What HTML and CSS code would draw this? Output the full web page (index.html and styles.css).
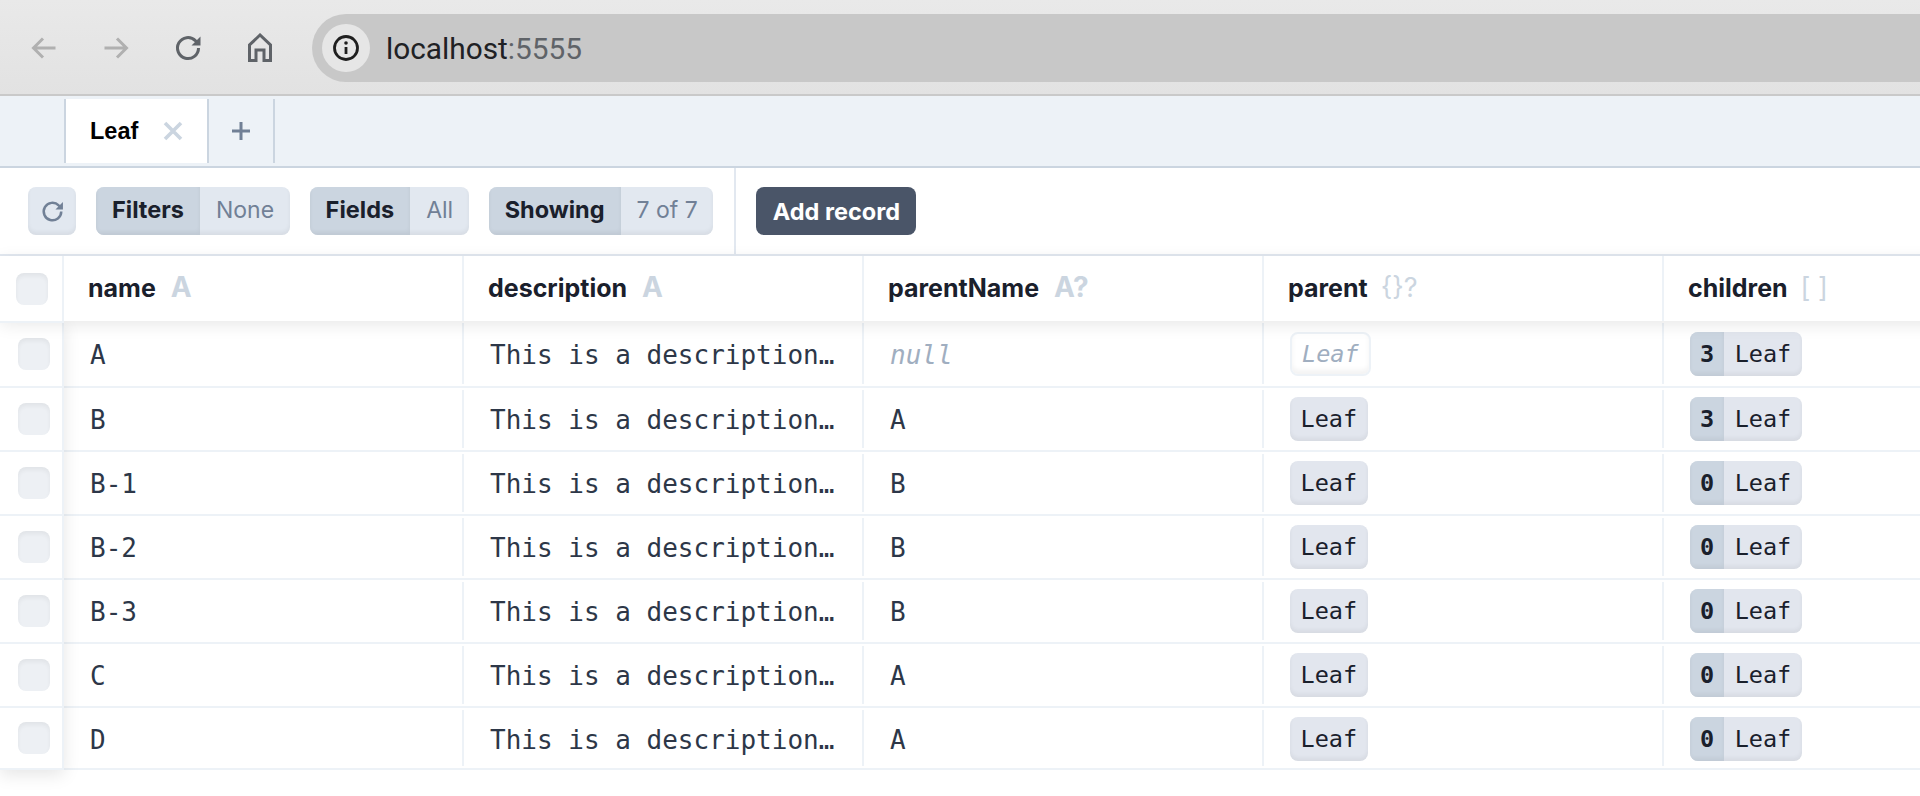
FILE: index.html
```html
<!DOCTYPE html>
<html lang="en">
<head>
  <meta charset="UTF-8">
  <title>Leaf</title>
  <link rel="stylesheet" href="styles.css">
</head>
<body>

  <div class="browser-bar">
    <svg class="nav-icon faded" viewBox="0 0 30 30"><path d="M26.500 15H5M14 5.500 4.500 15l9.500 9.500"/></svg>
    <svg class="nav-icon faded" viewBox="0 0 30 30"><path d="M3.500 15H25M16 5.500l9.500 9.500-9.500 9.500"/></svg>
    <svg class="nav-icon" viewBox="0 0 30 30"><path d="M25.500 15A10.500 10.500 0 1 1 22.400 7.600L25 10"/><path class="solid" d="M27.500 3.500v9h-9z"/></svg>
    <svg class="nav-icon" viewBox="0 0 30 30"><path d="M15 2 4.500 12v15.500H11V17h8v10.500h6.500V12z"/></svg>
    <div class="address">
      <div class="site-info">
        <svg viewBox="0 0 26 26"><circle cx="13" cy="13" r="11.500"/><path d="M13 12v7"/><circle class="dot" cx="13" cy="8" r="1.800"/></svg>
      </div>
      <span class="url">localhost<span class="port">:5555</span></span>
    </div>
  </div>

  <div class="tabs">
    <div class="tab">
      <span>Leaf</span>
      <svg class="tab-close" viewBox="0 0 20 20"><path d="M2 2l16 16M18 2 2 18"/></svg>
    </div>
    <div class="tab-add">
      <svg viewBox="0 0 20 20"><path d="M10 1v18M1 10h18"/></svg>
    </div>
  </div>

  <div class="toolbar">
    <div class="toolbar-left">
      <button class="refresh">
        <svg viewBox="0 0 30 30"><path d="M25.500 15A10.500 10.500 0 1 1 22.400 7.600L25 10"/><path class="solid" d="M27.500 3.500v9h-9z"/></svg>
      </button>
      <div class="split"><b>Filters</b><span>None</span></div>
      <div class="split"><b>Fields</b><span>All</span></div>
      <div class="split"><b>Showing</b><span>7 of 7</span></div>
    </div>
    <button class="add-record">Add record</button>
  </div>

  <div class="table">
    <div class="head">
      <div class="check-cell head-check"><i class="check"></i></div>
      <div class="th">name <em>A</em></div>
      <div class="th">description <em>A</em></div>
      <div class="th">parentName <em>A?</em></div>
      <div class="th">parent <em class="thin">{}?</em></div>
      <div class="th">children <em class="thin">[ ]</em></div>
    </div>

    <div class="body">
      <div class="check-col">
        <div class="check-cell"><i class="check"></i></div>
        <div class="check-cell"><i class="check"></i></div>
        <div class="check-cell"><i class="check"></i></div>
        <div class="check-cell"><i class="check"></i></div>
        <div class="check-cell"><i class="check"></i></div>
        <div class="check-cell"><i class="check"></i></div>
        <div class="check-cell"><i class="check"></i></div>
      </div>
      <div class="rows">
        <div class="row">
          <div class="td">A</div>
          <div class="td">This is a description…</div>
          <div class="td null">null</div>
          <div class="td"><span class="badge empty">Leaf</span></div>
          <div class="td"><span class="badge"><b>3</b><span>Leaf</span></span></div>
        </div>
        <div class="row">
          <div class="td">B</div>
          <div class="td">This is a description…</div>
          <div class="td">A</div>
          <div class="td"><span class="badge"><span>Leaf</span></span></div>
          <div class="td"><span class="badge"><b>3</b><span>Leaf</span></span></div>
        </div>
        <div class="row">
          <div class="td">B-1</div>
          <div class="td">This is a description…</div>
          <div class="td">B</div>
          <div class="td"><span class="badge"><span>Leaf</span></span></div>
          <div class="td"><span class="badge"><b>0</b><span>Leaf</span></span></div>
        </div>
        <div class="row">
          <div class="td">B-2</div>
          <div class="td">This is a description…</div>
          <div class="td">B</div>
          <div class="td"><span class="badge"><span>Leaf</span></span></div>
          <div class="td"><span class="badge"><b>0</b><span>Leaf</span></span></div>
        </div>
        <div class="row">
          <div class="td">B-3</div>
          <div class="td">This is a description…</div>
          <div class="td">B</div>
          <div class="td"><span class="badge"><span>Leaf</span></span></div>
          <div class="td"><span class="badge"><b>0</b><span>Leaf</span></span></div>
        </div>
        <div class="row">
          <div class="td">C</div>
          <div class="td">This is a description…</div>
          <div class="td">A</div>
          <div class="td"><span class="badge"><span>Leaf</span></span></div>
          <div class="td"><span class="badge"><b>0</b><span>Leaf</span></span></div>
        </div>
        <div class="row">
          <div class="td">D</div>
          <div class="td">This is a description…</div>
          <div class="td">A</div>
          <div class="td"><span class="badge"><span>Leaf</span></span></div>
          <div class="td"><span class="badge"><b>0</b><span>Leaf</span></span></div>
        </div>
      </div>
    </div>
  </div>

</body>
</html>
```

FILE: styles.css
```css
* {
  box-sizing: border-box;
}

html, body {
  height: 100%;
}

body {
  margin: 0;
  background-color: #fff;
  font-family: Inter, "Liberation Sans", sans-serif;
  color: #1a202c;
  overflow: hidden;
}

/* browser chrome */
.browser-bar {
  height: 96px;
  display: flex;
  align-items: center;
  padding: 2px 0 0 29px;
  background: linear-gradient(#e9e9e9, #e2e2e2);
  border-bottom: 2px solid #c9c9c9;
}

.nav-icon {
  width: 30px;
  height: 30px;
  margin-right: 42px;
  flex-shrink: 0;
  fill: none;
  stroke: #5f6368;
  stroke-width: 3;
}

.nav-icon.faded {
  stroke: #b0b0b0;
}

.nav-icon .solid {
  stroke: none;
  fill: #5f6368;
}

.address {
  flex: 1;
  height: 68px;
  margin-left: -5px;
  display: flex;
  align-items: center;
  padding-left: 10px;
  background-color: #c8c8c8;
  border-radius: 34px 0 0 34px;
}

.site-info {
  width: 48px;
  height: 48px;
  display: flex;
  align-items: center;
  justify-content: center;
  background-color: #e6e6e6;
  border-radius: 50%;
}

.site-info svg {
  width: 26px;
  height: 26px;
  fill: none;
  stroke: #1f1f1f;
  stroke-width: 2.8;
}

.site-info .dot {
  fill: #1f1f1f;
  stroke: none;
}

.url {
  margin-left: 16px;
  font-family: Roboto, sans-serif;
  font-size: 29.8px;
  color: #202124;
}

.port {
  color: #5f6368;
}

/* tabs */
.tabs {
  height: 72px;
  display: flex;
  padding: 3px 0 3px 64px;
  background-color: #edf2f7;
  border-bottom: 2px solid #cbd5e0;
}

.tab {
  width: 145px;
  display: flex;
  align-items: center;
  padding-left: 24px;
  gap: 25px;
  background-color: #fff;
  border-left: 2px solid #cbd5e0;
  border-right: 2px solid #cbd5e0;
  font-family: "Liberation Sans", sans-serif;
  font-size: 23.5px;
  font-weight: bold;
  color: #000;
}

.tab-close {
  width: 20px;
  height: 20px;
  fill: none;
  stroke: #cbd5e0;
  stroke-width: 3.6;
}

.tab-add {
  width: 66px;
  display: flex;
  align-items: center;
  justify-content: center;
  border-right: 2px solid #cbd5e0;
}

.tab-add svg {
  width: 20px;
  height: 20px;
  fill: none;
  stroke: #718096;
  stroke-width: 3;
}

/* toolbar */
.toolbar {
  height: 88px;
  display: flex;
  align-items: stretch;
  border-bottom: 2px solid #e2e8f0;
}

.toolbar-left {
  display: flex;
  align-items: center;
  gap: 20px;
  padding: 0 21px 0 28px;
  border-right: 2px solid #e2e8f0;
}

button {
  border: none;
  font-family: inherit;
}

.refresh {
  width: 48px;
  height: 48px;
  padding: 0;
  display: flex;
  align-items: center;
  justify-content: center;
  background-color: #e2e8f0;
  border-radius: 8px;
  box-shadow: inset 0 -3px 4px rgba(0,0,0,0.05);
}

.refresh svg {
  width: 25px;
  height: 25px;
  fill: none;
  stroke: #718096;
  stroke-width: 3;
}

.refresh .solid {
  fill: #718096;
  stroke: none;
}

.split {
  height: 48px;
  display: flex;
  border-radius: 8px;
  overflow: hidden;
  background-color: #e2e8f0;
  font-size: 23px;
  line-height: 46px;
  box-shadow: inset 0 -3px 4px rgba(0,0,0,0.05);
}

.split b {
  padding: 0 16px;
  background-color: #cbd5e0;
  font-size: 23.5px;
  font-weight: 700;
  box-shadow: inset 0 -3px 4px rgba(0,0,0,0.06);
}

.split span {
  padding: 0 15.5px 0 16px;
  color: #718096;
}

.add-record {
  align-self: center;
  height: 48px;
  width: 160px;
  margin-left: 20px;
  padding: 0;
  background-color: #4a5568;
  border-radius: 8px;
  color: #fff;
  font-size: 23.5px;
  font-weight: 700;
}

/* table */
.table {
  width: 2064px;
}

.head {
  height: 65px;
  display: flex;
  position: relative;
  z-index: 2;
  background-color: #fff;
  box-shadow: 0 4px 16px rgba(0,0,0,0.09);
}

.check-cell {
  height: 64px;
  display: flex;
  align-items: center;
  padding-left: 18px;
  border-bottom: 2px solid #edf2f7;
}

.check-cell:first-child {
  height: 67px;
}

.check-cell:last-child {
  height: 62px;
}

.head-check {
  width: 64px;
  height: 65px;
  flex-shrink: 0;
  padding-left: 16px;
  border-right: 2px solid #edf2f7;
}

.check {
  width: 32px;
  height: 32px;
  background-color: #edf0f4;
  border-radius: 8px;
  box-shadow: inset 0 3px 4px rgba(0,0,0,0.05);
}

.th {
  width: 400px;
  flex-shrink: 0;
  padding-left: 24px;
  border-right: 2px solid #edf2f7;
  font-size: 25px;
  font-weight: 700;
  line-height: 64px;
}

.th em {
  margin-left: 9px;
  font-size: 28px;
  line-height: 1;
  font-style: normal;
  color: #cbd5e0;
}

.th .thin {
  margin-left: 7px;
  font-weight: 400;
  font-size: 27px;
}

.body {
  display: flex;
}

.check-col {
  width: 64px;
  flex-shrink: 0;
  position: relative;
  z-index: 1;
  background-color: #fff;
  border-right: 2px solid #edf2f7;
  box-shadow: 0 5px 16px rgba(0,0,0,0.1);
}

.row {
  height: 64px;
  display: flex;
  align-items: center;
  border-bottom: 2px solid #edf2f7;
}

.row:first-child {
  height: 67px;
}

.row:last-child {
  height: 62px;
}

.td {
  width: 400px;
  height: calc(100% - 4px);
  flex-shrink: 0;
  display: flex;
  align-items: center;
  padding: 2px 0 0 26px;
  border-right: 2px solid #edf2f7;
  font-family: "DejaVu Sans Mono", monospace;
  font-size: 26px;
  color: #2d3748;
  white-space: nowrap;
}

.row:last-child .td {
  padding-top: 4px;
}

.null {
  font-style: italic;
  color: #a0aec0;
}

.badge {
  height: 44px;
  margin-top: -2px;
  display: inline-flex;
  align-items: center;
  overflow: hidden;
  background-color: #e2e6ee;
  border-radius: 8px;
  font-size: 23.5px;
  color: #1a202c;
  box-shadow: inset 0 -3px 4px rgba(0,0,0,0.05);
}

.badge span {
  padding: 0 10.5px;
}

.badge b {
  height: 100%;
  display: flex;
  align-items: center;
  padding: 0 10px;
  background-color: #cbd5e0;
  box-shadow: inset 0 -3px 4px rgba(0,0,0,0.05);
}

.badge.empty {
  padding: 0 10px;
  background-color: #fff;
  border: 2px solid #edf2f7;
  font-style: italic;
  color: #a0aec0;
  box-shadow: inset 0 -4px 5px rgba(0,0,0,0.05);
}
```
